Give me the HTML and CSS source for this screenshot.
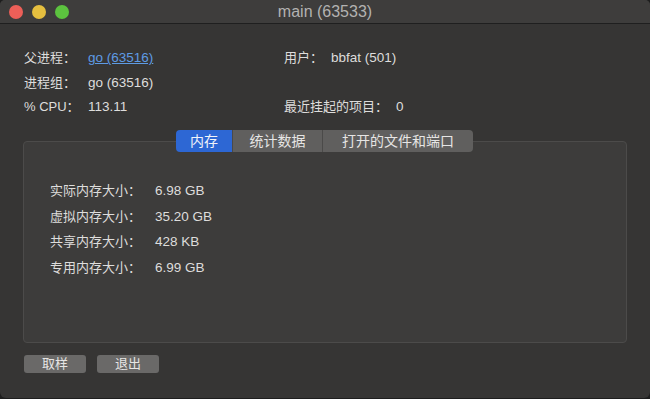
FILE: index.html
```html
<!DOCTYPE html>
<html lang="zh-CN">
<head>
  <meta charset="UTF-8">
  <title>main (63533)</title>
  <link rel="stylesheet" href="styles.css">
</head>
<body>
<div class="window">
  <div class="titlebar">
    <div class="lights">
      <span class="light close"></span>
      <span class="light min"></span>
      <span class="light max"></span>
    </div>
    <div class="title">main (63533)</div>
  </div>
  <div class="content">
    <div class="info">
      <span class="label">父进程：</span>
      <span class="value"><a href="#" class="link">go (63516)</a></span>
      <span class="pair"><span class="label">用户：</span><span class="value">bbfat (501)</span></span>

      <span class="label">进程组：</span>
      <span class="value">go (63516)</span>
      <span></span>

      <span class="label">% CPU：</span>
      <span class="value">113.11</span>
      <span class="pair"><span class="label">最近挂起的项目：</span><span class="value">0</span></span>
    </div>

    <div class="panel">
      <div class="tabs">
        <span class="tab tab_mem active">内存</span>
        <span class="tab tab_stat">统计数据</span>
        <span class="tab tab_files">打开的文件和端口</span>
      </div>
      <div class="box">
        <div class="mem">
          <span class="label">实际内存大小：</span><span class="value">6.98 GB</span>
          <span class="label">虚拟内存大小：</span><span class="value">35.20 GB</span>
          <span class="label">共享内存大小：</span><span class="value">428 KB</span>
          <span class="label">专用内存大小：</span><span class="value">6.99 GB</span>
        </div>
      </div>
    </div>

    <div class="buttons">
      <button class="btn">取样</button>
      <button class="btn">退出</button>
    </div>
  </div>
</div>
</body>
</html>
```

FILE: styles.css
```css
html, body {
  margin: 0;
  padding: 0;
  background: #1e1e1e;
}

body {
  font-family: "Liberation Sans", "Noto Sans CJK SC", sans-serif;
  font-size: 13px;
  line-height: 18px;
  color: #dedddc;
}

.window {
  width: 650px;
  height: 398px;
  background: #363534;
  border-radius: 5px 5px 6px 6px;
  overflow: hidden;
  display: flex;
  flex-direction: column;
}

.titlebar {
  height: 23px;
  background: #3e3d3c;
  border-bottom: 1px solid #1f1f1f;
  display: flex;
  align-items: center;
  position: relative;
}

.lights {
  display: flex;
  gap: 9px;
  padding-left: 9px;
}

.light {
  width: 14px;
  height: 14px;
  border-radius: 50%;
}

.close {
  background: #ec5f58;
}

.min {
  background: #e5bf3f;
}

.max {
  background: #5cc33f;
}

.title {
  position: absolute;
  left: 0;
  right: 0;
  text-align: center;
  font-size: 16px;
  color: #b3b2b1;
}

.content {
  padding: 22px 23px 0 23px;
}

.label, .value {
  display: block;
  height: 18px;
  line-height: 18px;
}

.value {
  font-size: 13.5px;
}

.info {
  display: grid;
  grid-template-columns: 64px 196px auto;
  grid-auto-rows: 24.5px;
  align-items: center;
  padding-left: 1px;
}

.pair {
  display: flex;
  gap: 8px;
  white-space: nowrap;
}

.link {
  color: #5e9be4;
  text-decoration: underline;
}

.panel {
  margin-top: 10px;
}

.tabs {
  display: flex;
  justify-content: center;
  position: relative;
  z-index: 1;
  padding-right: 1px;
}

.tab {
  height: 22px;
  line-height: 22px;
  text-align: center;
  font-size: 14px;
  color: #e6e5e4;
  background: #605f5e;
  border-left: 1px solid #4b4a49;
}

.tab_mem {
  width: 56px;
  border-left: none;
  border-radius: 4px 0 0 4px;
}

.tab_stat {
  width: 89px;
}

.tab_files {
  width: 150px;
  border-radius: 0 4px 4px 0;
}

.tab.active {
  background: #2d67d4;
  color: #f2f4fa;
}

.box {
  margin-top: -11px;
  height: 200px;
  background: #3d3c3b;
  border: 1px solid #4c4b4a;
  border-radius: 4px;
}

.mem {
  display: grid;
  grid-template-columns: 105px auto;
  grid-auto-rows: 25.5px;
  align-items: center;
  padding: 37px 0 0 26px;
}

.buttons {
  display: flex;
  gap: 11px;
  margin-top: 12px;
  padding-left: 1px;
}

.btn {
  width: 62px;
  height: 18px;
  padding: 0;
  border: none;
  border-radius: 3px;
  background: #6a6968;
  color: #e6e5e4;
  font-family: "Liberation Sans", "Noto Sans CJK SC", sans-serif;
  font-size: 13px;
  line-height: 18px;
}
```
